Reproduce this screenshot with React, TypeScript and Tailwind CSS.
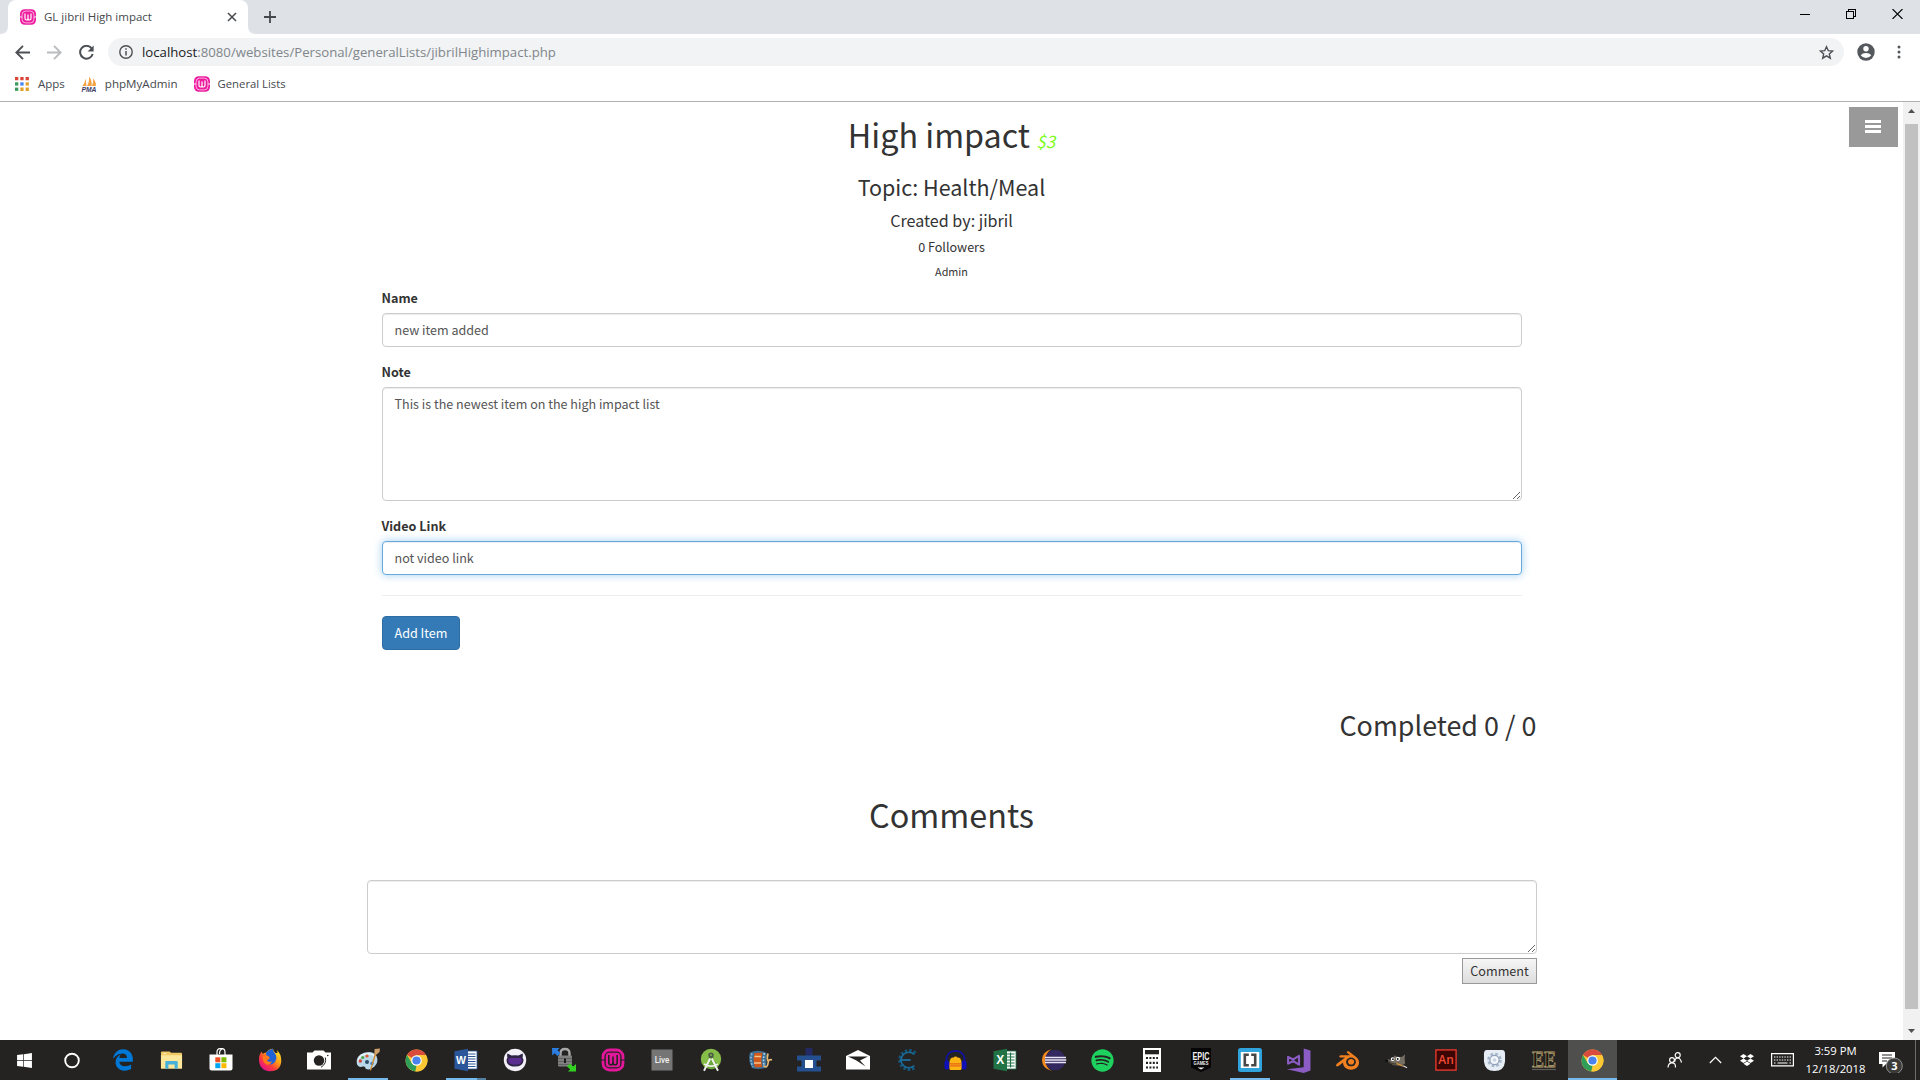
import React from "react";
import type { ReactNode } from "react";
import { FaWindows, FaSpotify, FaDropbox } from "react-icons/fa";
import { FaEdgeLegacy } from "react-icons/fa6";
import { SiBlender } from "react-icons/si";

const Svg = ({ size = 24, children }: { size?: number; children: ReactNode }) => (
  <svg width={size} height={size} viewBox="0 0 24 24" className="block shrink-0 overflow-visible">
    {children}
  </svg>
);

/* ---------- shared logos ---------- */

const WampFavicon = () => (
  <svg width="16" height="16" viewBox="0 0 16 16" className="block shrink-0">
    <rect x="0" y="0.2" width="16" height="15.6" rx="4.8" fill="#ee1c9f" />
    <rect x="2.1" y="2.1" width="11.8" height="11.8" rx="3.6" fill="none" stroke="#fbd0ea" strokeWidth="0.8" />
    <path d="M0 8h2M14 8h2" stroke="#fff" strokeWidth="0.9" />
    <path d="M5 4.6v4.6q0 1.800 1.500 1.800T8 9.2V5.500M8 9.2q0 1.800 1.500 1.800T11 9.2V4.600" fill="none" stroke="#fff" strokeWidth="1.200" />
  </svg>
);

const Chrome = () => (
  <Svg size={23}>
    <circle cx="12" cy="12" r="11.4" fill="#fcc934" />
    <path d="M2.1 6.3A11.4 11.4 0 0 1 21.9 6.3L12 6.6 7 9.2Z" fill="#d94b3d" />
    <path d="M2.1 6.3 7.2 15 12 17.5 10.8 23.3A11.4 11.4 0 0 1 2.1 6.3Z" fill="#2f9e58" />
    <path d="M21.9 6.3H12L17.2 9.2 17 14.6 10.8 23.3A11.4 11.4 0 0 0 21.9 6.3Z" fill="#fcc934" />
    <circle cx="12" cy="12" r="5.5" fill="#fff" />
    <circle cx="12" cy="12" r="4.3" fill="#4a83ee" />
  </Svg>
);

/* ---------- taskbar application icons ---------- */

const Explorer = () => (
  <Svg size={23}>
    <path d="M1 3.5q0-1 1-1h8l1.5 1.5H22q1 0 1 1V20H1Z" fill="#efc965" />
    <path d="M1 6.5h22V20.5H1Z" fill="#fce79b" />
    <path d="M5.5 20.5v-7q0-1 1-1h11q1 0 1 1v7h-3.3v-4.2H8.8v4.2Z" fill="#46b2dc" />
    <path d="M3.5 4.8h3" stroke="#fff3c8" />
  </Svg>
);

const Store = () => (
  <Svg size={24}>
    <path d="M8 7V4.5q0-3.800 3-3.800h2q3 0 3 3.800V7M10.500 6q0-4.500 3-5" fill="none" stroke="#fff" strokeWidth="1.200" />
    <path d="M.5 6.5h23v14q0 2-2 2h-19q-2 0-2-2Z" fill="#fff" />
    <path d="M6.3 9.3h5v5h-5z" fill="#f25022" />
    <path d="M12.4 9.3h5v5h-5z" fill="#7fba00" />
    <path d="M6.3 15.2h5v5h-5z" fill="#00a4ef" />
    <path d="M12.4 15.2h5v5h-5z" fill="#ffb900" />
  </Svg>
);

const Firefox = () => (
  <Svg size={24}>
    <defs>
      <linearGradient id="ff" x1="0.9" y1="0.1" x2="0.2" y2="0.9">
        <stop offset="0" stopColor="#ffe226" />
        <stop offset="0.4" stopColor="#ff9a16" />
        <stop offset="0.7" stopColor="#ff3b3a" />
        <stop offset="1" stopColor="#e31587" />
      </linearGradient>
    </defs>
    <path d="M1 11Q1 6 4 3.500L4.500 6Q6 4.500 8 4.500 11 1 15 .8 15 3 17.500 5L19.500 5Q19.500 3 18.500 1.800 23.300 6 23.300 12.500 23 23 12 23.300 1 22.500 1 11Z" fill="url(#ff)" />
    <path d="M8 4.500Q11 1.500 15 .8 14.600 3.500 17 5.500 19.500 9 17.500 13 15 17.500 10 16 6.500 14.500 6.500 11.500 9 12.500 11.500 11L8.500 10.500Z" fill="#1f62d8" />
    <path d="M4.500 8.500Q8 6 10.500 8.300 12.300 9 11.500 10.500 9.500 11 9 12.800 11 14.500 14 13.200 12.500 17.500 8.500 16.500 4.500 14.500 4.500 8.500Z" fill="#ff7a1c" />
  </Svg>
);

const Camera = () => (
  <Svg size={24}>
    <path d="M0 4.500h5.500L7.500 2.500h9l2 2H24V21.500H0Z" fill="#fff" />
    <circle cx="12" cy="12.500" r="5.200" fill="#242322" />
    <path d="M18.300 9.500Q20 15.500 14 19.300" fill="none" stroke="#242322" strokeWidth="1" />
    <circle cx="20.800" cy="7.500" r="0.800" fill="#242322" />
  </Svg>
);

const Paint = () => (
  <Svg size={24}>
    <path d="M.8 15.500Q-.5 8 8 4.800 17 2.500 20.500 8 23 14 18.500 18.500 13.500 23 9.500 20.500 9.500 18 7 18.500 2 20 .8 15.500Z" fill="#b9d8ea" />
    <path d="M2 14Q2 8 9 6 17 4.500 19.500 9.500" fill="none" stroke="#e6f3fa" strokeWidth="1.500" />
    <circle cx="4.300" cy="13" r="1.700" fill="#d2453a" />
    <circle cx="6.700" cy="9.500" r="1.600" fill="#54a64a" />
    <circle cx="11" cy="8" r="1.600" fill="#e2572e" />
    <circle cx="11" cy="14" r="2" fill="#2a4d66" />
    <circle cx="16" cy="15.500" r="1.700" fill="#3778c8" />
    <path d="M13.800 22.500 18.800 5.500 20.300 6 15 22.500Z" fill="#d98a2e" />
    <path d="M18.300 6 18.600 1 24 .5 23.500 4 20.500 6.500Z" fill="#cfa26c" />
  </Svg>
);

const Word = () => (
  <Svg size={24}>
    <path d="M12 3h11v18H12Z" fill="#fff" stroke="#2b579a" strokeWidth="0.800" />
    <path d="M14 6h7.500M14 8.500h7.500M14 11h7.500M14 13.500h7.500M14 16h7.500M14 18.500h7.500" stroke="#2b579a" strokeWidth="1.100" />
    <path d="M.5 3.200 14 .8V23.200L.5 20.800Z" fill="#2b579a" />
    <text x="7" y="16" textAnchor="middle" fontSize="10.500" fontWeight="700" fontFamily="Liberation Sans" fill="#fff">W</text>
  </Svg>
);

const GitHub = () => (
  <Svg size={24}>
    <circle cx="12" cy="12" r="11.200" fill="#f3f0f7" />
    <path d="M4.500 5.500 8.500 7.500Q12 6.800 15.500 7.500L19.500 5.500Q20.300 7.500 19.500 9.500 20.500 11 20.500 12.500 20 18.500 12 18.500 4 18.500 3.500 12.500 3.500 11 4.500 9.500 3.700 7.500 4.500 5.500Z" fill="#2f2446" />
    <path d="M5 12Q5 9.800 8 10h8q3-.2 3 2 0 4.800-7 4.800T5 12Z" fill="#5c2d91" />
  </Svg>
);

const Lock = () => (
  <Svg size={24}>
    <path d="M8.500 9V5.500q0-4.500 4.500-4.500t4.500 4.500V9" fill="none" stroke="#a9a9a9" strokeWidth="2.400" />
    <rect x="6" y="7.500" width="14" height="11" rx="1" fill="#808080" />
    <path d="M6 10.500h14M6 13.500h14M6 16.500h14" stroke="#5a5a5a" strokeWidth="0.800" />
    <rect x="12" y="10.500" width="2" height="4.500" fill="#1c1c1c" />
    <path d="M0 0h7.500L5.500 2.300 8.500 5 5.500 8 2.700 5.200.200 7.500Z" fill="#2b7de0" />
    <path d="M24 23.500h-8l2.200-2.200L15 18.500l3-3 3.200 3L24 16Z" fill="#35d024" />
  </Svg>
);

const Wamp = () => (
  <Svg size={24}>
    <rect x="2" y="2" width="20" height="20" rx="6.500" fill="none" stroke="#e3179a" strokeWidth="2.800" />
    <rect x="4.800" y="4.800" width="14.400" height="14.400" rx="3.500" fill="#e3179a" />
    <path d="M0 12h4.800M19.200 12H24" stroke="#242322" strokeWidth="1.200" />
    <path d="M7.800 7v7.500q0 2.300 2.100 2.300t2.100-2.300V8.500M12 14.500q0 2.300 2.100 2.300t2.100-2.300V7" fill="none" stroke="#242322" strokeWidth="1.600" />
  </Svg>
);

const Live = () => (
  <Svg size={22}>
    <rect x="0.500" y="0.500" width="23" height="23" fill="#757575" />
    <text x="12" y="15.800" textAnchor="middle" fontSize="10.500" fontWeight="500" fontFamily="Roboto" textLength="16" lengthAdjust="spacingAndGlyphs" fill="#f2f2f2">Live</text>
  </Svg>
);

const AndroidStudio = () => (
  <Svg size={24}>
    <circle cx="12" cy="11" r="10.200" fill="#86bd48" />
    <path d="M6 18 12 9 20 17.500Q16 22 12 21Z" fill="#6aa53c" />
    <path d="M9.800 5.500h4.400v4.500H9.800Z" fill="#4d6640" />
    <circle cx="12" cy="7" r="2.600" fill="#4b5b47" />
    <circle cx="12" cy="7" r="0.900" fill="#86bd48" />
    <path d="M11.200 10.500 5 22.800M12.800 10.500l6.200 12.300" stroke="#f1f1f1" strokeWidth="1.900" />
    <path d="M5 15.800Q12 20.500 19 15.800" stroke="#f1f1f1" strokeWidth="1.600" fill="none" />
  </Svg>
);

const Film = () => (
  <Svg size={24}>
    <path d="M2 4.500Q8 1.500 15 3.500L18.500 5V19.500Q11 22 4 20-.5 12 2 4.500Z" fill="#3c6f96" />
    <path d="M4 5.500Q1.500 12 5 19" fill="none" stroke="#9cc3dc" strokeWidth="1.500" strokeDasharray="1.800 1.500" />
    <path d="M6.500 5 14.500 4.800Q12.500 12 14 19L7 19.500Q4.500 12 6.500 5Z" fill="#d2591c" />
    <path d="M6.500 8.500h6.500M6 15h7" stroke="#f4c48c" strokeWidth="1.500" />
    <path d="M16.500 5Q14.500 12 16.500 19" fill="none" stroke="#b8d4e6" strokeWidth="1.600" strokeDasharray="1.800 1.500" />
    <path d="M15.500 17.500Q19.500 21.500 20.300 14 20.600 11 24 11.800M20 5.500Q18.500 10 20.300 14" fill="none" stroke="#e7b774" strokeWidth="1.700" />
  </Svg>
);

const BlueTower = () => (
  <Svg size={24}>
    <path d="M8.500 0h7v8h-7z" fill="#232a63" />
    <path d="M0 7.500h24V12.500H0z" fill="#24508f" />
    <path d="M4.500 10h15v11h-15z" fill="#24508f" />
    <path d="M0 18.500h24v5H0z" fill="#24508f" />
    <path d="M8 12h8v8H8z" fill="#fff" />
  </Svg>
);

const Mail = () => (
  <Svg size={24}>
    <path d="M0 8 12 2l12 6v13.500H0Z" fill="#fff" />
    <path d="M2 8.500h20L14 12.500 19.500 18.500 10.500 12.500Z" fill="#242322" />
  </Svg>
);

const GearC = () => (
  <Svg size={22}>
    <path d="M21 4.500A10 10 0 1 0 21 19.500" fill="none" stroke="#14567c" strokeWidth="4" strokeDasharray="2.600 2" />
    <path d="M20 6A8.500 8.500 0 1 0 20 18" fill="none" stroke="#1a6d9a" strokeWidth="1.800" />
    <path d="M4 12h12" stroke="#1a6d9a" strokeWidth="2" />
  </Svg>
);

const Audacity = () => (
  <Svg size={23}>
    <path d="M2.500 15Q1.500 2.500 12 2 22.500 2.500 21.500 15" fill="none" stroke="#12129c" strokeWidth="2" />
    <path d="M6 12Q7 8.500 9.500 9 12 6.500 14.500 9 17 8.500 18 12 19.500 20 17.500 22H6.500Q4.500 20 6 12Z" fill="#fbb414" />
    <path d="M6 15.500h12M6.500 17.500h11" stroke="#e8641a" strokeWidth="1.300" />
    <rect x="0.500" y="12" width="5" height="9.500" rx="2.300" fill="#1010b8" />
    <rect x="18.500" y="12" width="5" height="9.500" rx="2.300" fill="#1010b8" />
  </Svg>
);

const Excel = () => (
  <Svg size={24}>
    <path d="M12 3h11v18H12Z" fill="#fff" stroke="#217346" strokeWidth="0.800" />
    <path d="M14 6h7.500M14 9h7.500M14 12h7.500M14 15h7.500M14 18h7.500M17.500 4.500v15" stroke="#217346" strokeWidth="1.200" />
    <path d="M.5 3.200 14 .8V23.200L.5 20.800Z" fill="#217346" />
    <text x="7.200" y="16.200" textAnchor="middle" fontSize="12" fontWeight="700" fontFamily="Liberation Sans" fill="#fff">X</text>
  </Svg>
);

const Eclipse = () => (
  <Svg size={24}>
    <path d="M10 1Q0 3.500 0 12t10 11Q3.800 20 3.800 12T10 1Z" fill="#f58a1f" />
    <circle cx="13.200" cy="12" r="10.300" fill="#33285f" />
    <path d="M3 9.500h21M3 12h21.300M3 14.500h21" stroke="#e9e6f3" strokeWidth="1.400" />
  </Svg>
);

const Calculator = () => (
  <Svg size={24}>
    <path d="M3 0h18v24H3z" fill="#fff" />
    <path d="M5 2h14v4.300H5z" fill="#242322" />
    <path d="M6 10h12M6 14.800h12M6 19.500h12" stroke="#242322" strokeWidth="2.200" strokeDasharray="2 1.400" />
  </Svg>
);

const Epic = () => (
  <Svg size={24}>
    <path d="M2 0h20v19.500L12 24 2 19.500Z" fill="#050505" />
    <text x="12" y="11.500" textAnchor="middle" fontSize="11" fontWeight="700" fontFamily="Liberation Sans" textLength="17" lengthAdjust="spacingAndGlyphs" fill="#f2f2f2">EPIC</text>
    <text x="12" y="17" textAnchor="middle" fontSize="4.500" fontWeight="700" fontFamily="Liberation Sans" textLength="15" lengthAdjust="spacingAndGlyphs" fill="#f2f2f2">GAMES</text>
    <path d="M8.500 19.500h7L12 21.500Z" fill="#f2f2f2" />
  </Svg>
);

const Brackets = () => (
  <Svg size={24}>
    <rect x="0" y="0" width="24" height="24" rx="2.500" fill="#2ea3dc" />
    <path d="M2.800 4h18.400v16H2.800z" fill="#fff" />
    <path d="M10.800 6.800H6.800v10.400h4M13.200 6.800h4v10.400h-4" fill="none" stroke="#474747" strokeWidth="2.600" />
  </Svg>
);

const VisualStudio = () => (
  <Svg size={25}>
    <path d="M17 .5 23.500 2.500V21.500L17 24 .8 20.500 17 18.500Z" fill="#8a5cc4" />
    <path d="M2 8.500v6.500L7 12.500 12.500 16V7.500L7 11Z" fill="none" stroke="#8a5cc4" strokeWidth="2" strokeLinejoin="round" />
  </Svg>
);

const Gimp = () => (
  <Svg size={23}>
    <path d="M2 10.500 6 11.500 9 9 10 6.500 13 8.500 18 8 21 5.500 20.500 10 21 15 17 17.500 9 17 4 14Z" fill="#756e62" />
    <path d="M4 13Q8 17 14 15" fill="none" stroke="#454037" strokeWidth="1.500" />
    <ellipse cx="1.800" cy="12.300" rx="1.800" ry="1.300" fill="#111" />
    <circle cx="8" cy="10.500" r="2" fill="#fff" />
    <circle cx="13.500" cy="10.200" r="2.200" fill="#fff" />
    <circle cx="8.300" cy="10.600" r="0.900" fill="#111" />
    <circle cx="13.300" cy="10.400" r="1" fill="#111" />
    <path d="M12 15 19 18" stroke="#d9953a" strokeWidth="1.300" />
    <path d="M19 17.500 23 19.500" stroke="#ddd" strokeWidth="1.300" />
  </Svg>
);

const Animate = () => (
  <Svg size={22}>
    <rect x="1" y="1" width="22" height="22" fill="#3a0503" stroke="#e6392b" strokeWidth="1.500" />
    <text x="12" y="16.500" textAnchor="middle" fontSize="13" fontWeight="600" fontFamily="Open Sans" fill="#f04a35">An</text>
  </Svg>
);

const GearBubble = () => (
  <Svg size={23}>
    <path d="M4 1h16q3 0 3 4v8q-1 10-11 10T1 13V5q0-4 3-4Z" fill="#e6edf5" />
    <circle cx="12" cy="11.500" r="6" fill="none" stroke="#a9b7cb" strokeWidth="3.300" strokeDasharray="2.700 2" />
    <circle cx="12" cy="11.500" r="4.800" fill="#f2f6fa" stroke="#8fa0ba" strokeWidth="1.200" />
    <circle cx="12" cy="11.500" r="1.800" fill="#c8d3e2" />
  </Svg>
);

const DoubleE = () => (
  <Svg size={24}>
    <text x="12" y="18.500" textAnchor="middle" fontSize="24" fontWeight="700" fontFamily="Liberation Serif" textLength="24" lengthAdjust="spacingAndGlyphs" fill="#17130c" stroke="#b5a172" strokeWidth="0.800">EE</text>
    <path d="M0 21.500h24" stroke="#5c5c56" strokeWidth="1.200" />
  </Svg>
);

const apps: { icon: ReactNode; line?: boolean; active?: boolean; split?: boolean }[] = [
  { icon: <FaEdgeLegacy size={22} color="#0078d7" /> },
  { icon: <Explorer /> },
  { icon: <Store /> },
  { icon: <Firefox /> },
  { icon: <Camera /> },
  { icon: <Paint />, line: true },
  { icon: <Chrome /> },
  { icon: <Word />, line: true, split: true },
  { icon: <GitHub /> },
  { icon: <Lock /> },
  { icon: <Wamp /> },
  { icon: <Live /> },
  { icon: <AndroidStudio /> },
  { icon: <Film /> },
  { icon: <BlueTower /> },
  { icon: <Mail /> },
  { icon: <GearC /> },
  { icon: <Audacity /> },
  { icon: <Excel /> },
  { icon: <Eclipse /> },
  { icon: <FaSpotify size={23} color="#1ed15e" /> },
  { icon: <Calculator /> },
  { icon: <Epic /> },
  { icon: <Brackets />, line: true },
  { icon: <VisualStudio /> },
  { icon: <SiBlender size={23} color="#f08020" /> },
  { icon: <Gimp /> },
  { icon: <Animate /> },
  { icon: <GearBubble /> },
  { icon: <DoubleE /> },
  { icon: <Chrome />, active: true },
];

const Taskbar = () => (
  <footer className="flex h-10 w-full items-stretch bg-[#242322] text-white">
    <div className="flex w-12 items-center justify-center">
      <FaWindows size={17} />
    </div>
    <div className="flex w-12 items-center justify-center">
      <svg width="17" height="17" viewBox="0 0 17 17">
        <circle cx="8" cy="8.500" r="6.800" fill="none" stroke="#fff" strokeWidth="1.900" />
      </svg>
    </div>
    <div className="ml-[2px] flex">
      {apps.map((a, i) => (
        <div key={i} className={a.active ? "relative flex w-[49px] items-center justify-center bg-[#4f4f4e]" : "relative flex w-[49px] items-center justify-center"}>
          {a.icon}
          {a.line && <span className="absolute bottom-0 left-[5px] h-[2px] w-10 bg-[#76b9ed]" />}
          {a.split && <span className="absolute bottom-0 left-9 h-[2px] w-[9px] bg-[#54819f]" />}
          {a.active && <span className="absolute bottom-0 left-0 h-[2px] w-full bg-[#76b9ed]" />}
        </div>
      ))}
    </div>
    <div className="ml-auto flex items-center">
      <svg width="16" height="16" viewBox="0 0 16 16" fill="none" stroke="#fff" strokeWidth="1.200" className="mr-[26px]">
        <circle cx="10.700" cy="3.200" r="2.500" />
        <path d="M7.800 9.800Q8 6 10.700 6t3.800 4.500" />
        <circle cx="5" cy="8" r="2.400" />
        <path d="M1 15.500Q1.300 10.800 5 10.800T8.500 15.500" />
      </svg>
      <svg width="13" height="8" viewBox="0 0 13 8" fill="none" stroke="#fff" strokeWidth="1.200" className="mr-[18px]">
        <path d="M.8 7 6.500 1.300 12.200 7" />
      </svg>
      <FaDropbox size={14} className="mr-[17px]" />
      <svg width="23" height="14" viewBox="0 0 23 14" className="mr-[11px]">
        <path d="M.6.600h21.800v12.300H.6z" fill="none" stroke="#fff" strokeWidth="1.200" />
        <path d="M3 4h17.500M3 7h17.500" stroke="#fff" strokeWidth="1.200" strokeDasharray="1.400 1.200" />
        <path d="M3 10h1.500M6.500 10h10M18.500 10H20" stroke="#fff" strokeWidth="1.200" />
      </svg>
      <div className="flex w-[61px] flex-col items-center font-['Open_Sans',sans-serif] text-[11.300px] leading-[18px]">
        <span>3:59 PM</span>
        <span>12/18/2018</span>
      </div>
      <div className="relative ml-[13px] h-[26px] w-[26px]">
        <svg width="26" height="26" viewBox="0 0 26 26" className="block">
          <path d="M0 5h16v12H7l-3.500 3.500V17H0z" fill="#fff" />
          <path d="M3 8h10M3 11h10M3 14h5" stroke="#242322" strokeWidth="1" />
          <circle cx="15.300" cy="20" r="8" fill="#3b3b3a" stroke="#9a9a9a" strokeWidth="0.900" className="-translate-y-px" />
          <text x="15.300" y="23" textAnchor="middle" fontSize="11" fontWeight="700" fontFamily="Open Sans" fill="#fff">3</text>
        </svg>
      </div>
      <div className="ml-[10px] mr-[4px] h-10 w-px bg-[#6d6d6d]" />
    </div>
  </footer>
);

/* ---------- browser frame ---------- */

const AppsGrid = () => (
  <svg width="14" height="14" viewBox="0 0 14 14" className="block shrink-0">
    <path d="M0 0h3.300v3.300H0zM5.300 0h3.300v3.300H5.300zM10.600 0h3.300v3.300h-3.300z" fill="#db4437" />
    <path d="M0 5.300h3.300v3.300H0z" fill="#3c9a5f" />
    <path d="M5.300 5.300h3.300v3.300H5.300z" fill="#4285f4" />
    <path d="M10.600 5.300h3.300v3.300h-3.300z" fill="#e2a32c" />
    <path d="M0 10.600h3.300v3.300H0z" fill="#3c9a5f" />
    <path d="M5.300 10.600h3.300v3.300H5.300zM10.600 10.600h3.300v3.300h-3.300z" fill="#e2a32c" />
  </svg>
);

const PmaIcon = () => (
  <svg width="16" height="16" viewBox="0 0 16 16" className="block shrink-0">
    <path d="M1.500 10Q4 7 4.500 2.500L5.500 10ZM6 10Q8.500 6 8 .5 11.500 5 10.500 10ZM11 10Q13 6 12 2.500 15.500 6 14.800 10Z" fill="#f2a040" />
    <text x="8" y="15.600" textAnchor="middle" fontSize="6.800" fontStyle="italic" fontWeight="700" fontFamily="Liberation Sans" textLength="15" lengthAdjust="spacingAndGlyphs" fill="#3b3b66">PMA</text>
  </svg>
);

const BrowserFrame = () => (
  <header className="w-full bg-white font-['Open_Sans',sans-serif]">
    <div className="flex h-[34px] bg-[#dee1e6]">
      <div className="relative ml-2 flex w-60 items-center rounded-t-lg bg-white pl-3 pr-[11px]">
        <svg width="8" height="8" viewBox="0 0 8 8" className="absolute -left-2 bottom-0">
          <path d="M8 0v8H0Q8 8 8 0Z" fill="#fff" />
        </svg>
        <svg width="8" height="8" viewBox="0 0 8 8" className="absolute -right-2 bottom-0">
          <path d="M0 0v8h8Q0 8 0 0Z" fill="#fff" />
        </svg>
        <WampFavicon />
        <span className="ml-2 text-[11.500px] text-[#45494d]">GL jibril High impact</span>
        <svg width="10" height="10" viewBox="0 0 10 10" className="ml-auto">
          <path d="M1 1l8 8M9 1 1 9" stroke="#45494d" strokeWidth="1.500" />
        </svg>
      </div>
      <div className="ml-4 flex items-center">
        <svg width="12" height="12" viewBox="0 0 12 12">
          <path d="M6 0v12M0 6h12" stroke="#45494d" strokeWidth="1.800" />
        </svg>
      </div>
      <div className="ml-auto mr-[17px] flex items-start gap-9 pt-[9px]">
        <svg width="10" height="10" viewBox="0 0 10 10">
          <path d="M0 5.500h10" stroke="#000" />
        </svg>
        <svg width="10" height="10" viewBox="0 0 10 10" fill="none" stroke="#000" shapeRendering="crispEdges">
          <path d="M.5 2.500h7v7h-7zM2.500 2.500v-2h7v7h-2" />
        </svg>
        <svg width="11" height="10" viewBox="0 0 11 10">
          <path d="M.5 0l10 10M10.500 0 .5 10" stroke="#000" strokeWidth="1.100" />
        </svg>
      </div>
    </div>
    <div className="flex h-9 items-center pl-[15px] pr-[15px]">
      <svg width="15" height="15" viewBox="0 0 15 15" fill="none" stroke="#4c5054" strokeWidth="1.900">
        <path d="M15 7.500H1.500M8 .9 1.400 7.500 8 14.100" />
      </svg>
      <svg width="15" height="15" viewBox="0 0 15 15" fill="none" stroke="#babcbe" strokeWidth="1.900" className="ml-[17px]">
        <path d="M0 7.500h13.500M7 .9l6.600 6.600L7 14.100" />
      </svg>
      <svg width="15" height="15" viewBox="0 0 15 15" className="ml-[17px]">
        <path d="M12.600 3.300A6.400 6.400 0 1 0 13.700 9" fill="none" stroke="#4c5054" strokeWidth="2" />
        <path d="M14.600.500V6.500H8.600Z" fill="#4c5054" />
      </svg>
      <div className="ml-[14px] flex h-7 flex-1 items-center rounded-full bg-[#f1f3f4] pl-[11px] pr-[10px] text-[13.200px] text-[#80868b]">
        <svg width="14" height="14" viewBox="0 0 14 14">
          <circle cx="7" cy="7" r="6.200" fill="none" stroke="#4c5054" strokeWidth="1.400" />
          <path d="M7 6v4.500M7 3.300v1.500" stroke="#4c5054" strokeWidth="1.500" />
        </svg>
        <span className="ml-[9px] mt-px"><span className="text-[#202124]">localhost</span>:8080/websites/Personal/generalLists/jibrilHighimpact.php</span>
        <svg width="15" height="15" viewBox="0 0 15 15" className="ml-auto">
          <path d="M7.500 1.700 9.300 5.700 13.600 6.100 10.300 8.900 11.300 13.200 7.500 10.900 3.700 13.200 4.700 8.900 1.400 6.100 5.700 5.700Z" fill="none" stroke="#4c5054" strokeWidth="1.400" />
        </svg>
      </div>
      <svg width="18" height="18" viewBox="0 0 18 18" className="ml-[13px]">
        <circle cx="9" cy="9" r="8.700" fill="#54585d" />
        <circle cx="9" cy="5.700" r="2.700" fill="#fff" />
        <path d="M3.700 12.300Q5.500 9.900 9 9.900t5.300 2.400Q12.300 15 9 15t-5.300-2.700Z" fill="#fff" />
      </svg>
      <svg width="4" height="14" viewBox="0 0 4 14" fill="#54585d" className="ml-[22px] mr-[4px]">
        <circle cx="2" cy="2" r="1.500" />
        <circle cx="2" cy="7" r="1.500" />
        <circle cx="2" cy="12" r="1.500" />
      </svg>
    </div>
    <div className="flex h-8 items-start border-b border-[#b0b0b0] pl-[15px] pt-[6px] text-[11.500px] leading-4 text-[#45494d]">
      <span className="mt-px"><AppsGrid /></span>
      <span className="ml-[9px]">Apps</span>
      <span className="ml-[16px]"><PmaIcon /></span>
      <span className="ml-[8px] text-[11.600px]">phpMyAdmin</span>
      <span className="ml-[16px]"><WampFavicon /></span>
      <span className="ml-[8px] text-[11.300px]">General Lists</span>
    </div>
  </header>
);

/* ---------- page ---------- */

const field =
  "block w-full rounded border border-[#ccc] bg-white px-3 text-[12.550px] leading-5 text-[#555] shadow-[inset_0_1px_1px_rgba(0,0,0,0.075)] outline-none";
const fieldFocused =
  "block h-[34px] w-full rounded border border-[#66a9dd] bg-white px-3 pb-[7px] pt-[5px] text-[12.550px] leading-5 text-[#555] shadow-[inset_0_1px_1px_rgba(0,0,0,0.075),0_0_8px_rgba(102,175,233,0.6)] outline-none";

const Page = () => (
  <main className="relative flex-1 bg-white font-['Noto_Sans_CJK_SC',sans-serif] text-[#333]">
    <div className="mx-auto flex w-[1170px] flex-col">
      <div className="flex flex-col px-[15px]">
        <h1 className="mt-3 h-10 text-center text-[32.300px] leading-10">
          High impact <span className="-ml-[1px] text-[17px] italic text-[#7dfc1c]">$3</span>
        </h1>
        <h3 className="mt-5 h-[26px] text-center text-[21.500px] leading-[26px]">Topic: Health/Meal</h3>
        <h4 className="mt-[10px] h-5 text-center text-[16.100px] leading-5">Created by: jibril</h4>
        <h5 className="mt-[7px] h-5 text-center text-[12.600px] leading-5">0 Followers</h5>
        <h6 className="mt-[5px] h-[18px] text-center text-[10.800px] leading-[18px]">Admin</h6>
        <label className="mt-2 h-5 text-[12.600px] font-bold leading-5">Name</label>
        <input className={field + " mt-[5px] h-[34px] pb-[7px] pt-[5px]"} defaultValue="new item added" />
        <label className="mt-[15px] h-5 text-[12.600px] font-bold leading-5">Note</label>
        <textarea className={field + " mt-[5px] h-[114px] py-[6px]"} defaultValue="This is the newest item on the high impact list" />
        <label className="mt-[15px] h-5 text-[12.600px] font-bold leading-5">Video Link</label>
        <input className={fieldFocused + " mt-[5px]"} defaultValue="not video link" />
        <hr className="mt-5 border-[#eee]" />
        <button className="mt-5 h-[34px] self-start rounded border border-[#2e6da4] bg-[#337ab7] px-3 text-[12.600px] leading-5 text-white">
          Add Item
        </button>
      </div>
      <h2 className="mt-[57px] h-9 text-right text-[26.900px] leading-9">Completed 0 / 0</h2>
      <h1 className="mt-[51px] h-10 text-center text-[32.400px] leading-10">Comments</h1>
      <textarea className={field + " mt-[46px] h-[74px] py-[6px]"} />
      <button className="mt-1 h-[26px] w-[75px] self-end border border-[#999] bg-linear-to-b from-[#f6f6f6] to-[#dddddd] pl-px text-[12.600px] leading-5 text-[#333]">
        Comment
      </button>
    </div>
    <button className="absolute right-[5px] top-[5px] flex h-10 w-[49px] flex-col items-center justify-center gap-[2px] bg-[#999] pr-px">
      <span className="h-[3px] w-4 bg-white" />
      <span className="h-[3px] w-4 bg-white" />
      <span className="mb-px h-[3px] w-4 bg-white" />
    </button>
  </main>
);

const Scrollbar = () => (
  <div className="flex w-[17px] flex-col items-center bg-[#f1f1f1]">
    <svg width="17" height="22" viewBox="0 0 17 22">
      <path d="M5 11 8.500 7l3.500 4Z" fill="#505050" />
    </svg>
    <div className="h-[885px] w-[13px] bg-[#c1c1c1]" />
    <svg width="17" height="17" viewBox="0 0 17 17" className="mt-auto">
      <path d="M5 6 8.500 10 12 6Z" fill="#505050" />
    </svg>
  </div>
);

export default function App() {
  return (
    <div className="flex h-[1080px] w-[1920px] flex-col overflow-hidden bg-white">
      <BrowserFrame />
      <div className="flex flex-1">
        <Page />
        <Scrollbar />
      </div>
      <Taskbar />
    </div>
  );
}
